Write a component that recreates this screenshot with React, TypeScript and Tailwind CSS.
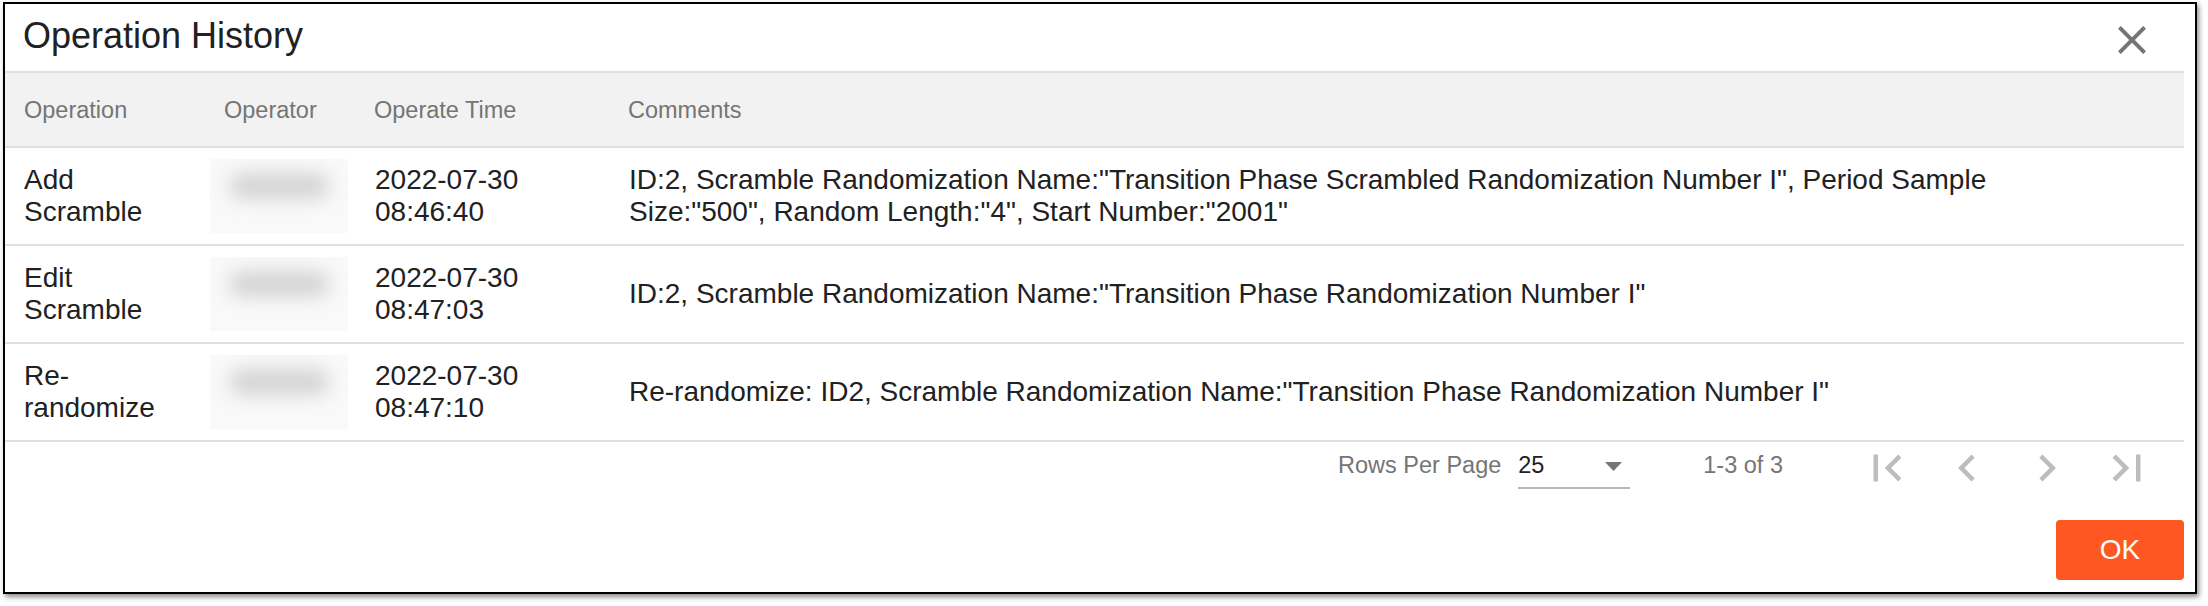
import React from "react";

type Row = {
  op: string[];
  time: string[];
  comment: string[];
};

const rows: Row[] = [
  {
    op: ["Add", "Scramble"],
    time: ["2022-07-30", "08:46:40"],
    comment: [
      'ID:2, Scramble Randomization Name:"Transition Phase Scrambled Randomization Number I", Period Sample',
      'Size:"500", Random Length:"4", Start Number:"2001"',
    ],
  },
  {
    op: ["Edit", "Scramble"],
    time: ["2022-07-30", "08:47:03"],
    comment: ['ID:2, Scramble Randomization Name:"Transition Phase Randomization Number I"'],
  },
  {
    op: ["Re-", "randomize"],
    time: ["2022-07-30", "08:47:10"],
    comment: ['Re-randomize: ID2, Scramble Randomization Name:"Transition Phase Randomization Number I"'],
  },
];

function Lines({ lines }: { lines: string[] }) {
  return (
    <div>
      {lines.map((l, i) => (
        <div key={i} className="whitespace-nowrap">
          {l}
        </div>
      ))}
    </div>
  );
}

function BlurName() {
  return (
    <div className="ml-[5px] flex h-[74px] w-[138px] justify-center overflow-hidden bg-[#f9f9f9] pt-[14px]">
      <div className="h-[26px] w-[100px] rounded-full bg-[#d4d4d4] blur-[9px]" />
    </div>
  );
}

function PagerIcon({ d }: { d: string }) {
  return (
    <svg width="54" height="54" viewBox="0 0 24 24" className="fill-[#bdbdbd]">
      <path d={d} />
    </svg>
  );
}

export default function App() {
  return (
    <div className="h-[606px] w-[2208px] overflow-hidden bg-white font-['Liberation_Sans',Arial,sans-serif] text-[#212121]">
      <div className="ml-[3px] mt-[2px] flex h-[592px] w-[2194px] flex-col border-2 border-black bg-white shadow-[2px_3px_5px_rgba(0,0,0,0.45)]">
        {/* Title bar */}
        <div className="flex h-[67px] items-start justify-between">
          <div className="pl-[18px] pt-[12px] text-[36px] leading-[40px]">Operation History</div>
          <svg width="48" height="48" viewBox="0 0 24 24" className="mr-[39px] mt-[12px] fill-[#757575]">
            <path d="M19 6.41L17.59 5 12 10.59 6.41 5 5 6.41 10.59 12 5 17.59 6.41 19 12 13.41 17.59 19 19 17.59 13.41 12z" />
          </svg>
        </div>

        <div className="mr-[11px] flex flex-col">
          {/* Header */}
          <div className="flex h-[77px] items-center border-y-2 border-[#e0e0e0] bg-[#f2f2f2] text-[23.5px] leading-[28px] text-[#757575]">
            <div className="w-[200px] pl-[19px]">Operation</div>
            <div className="w-[150px] pl-[19px]">Operator</div>
            <div className="w-[254px] pl-[19px]">Operate Time</div>
            <div className="flex-1 pl-[19px]">Comments</div>
          </div>

          {/* Rows */}
          {rows.map((r, i) => (
            <div
              key={i}
              className="flex h-[98px] items-center border-b-2 border-[#e0e0e0] text-[28px] leading-[32px]"
            >
              <div className="w-[200px] pl-[19px]">
                <Lines lines={r.op} />
              </div>
              <div className="w-[150px]">
                <BlurName />
              </div>
              <div className="w-[254px] pl-[20px]">
                <Lines lines={r.time} />
              </div>
              <div className="flex-1 pl-[20px]">
                <Lines lines={r.comment} />
              </div>
            </div>
          ))}

          {/* Pagination */}
          <div className="flex h-[54px] items-start justify-end pr-[30px] text-[23.5px] leading-[28px] text-[#757575]">
            <div className="mt-[9px]">Rows Per Page</div>
            <div className="ml-[17px] mt-[9px] flex h-[38px] w-[112px] items-start justify-between border-b-2 border-[#b8b8b8]">
              <span className="text-[#212121]">25</span>
              <svg width="17" height="9" viewBox="0 0 17 9" className="mr-[8px] mt-[11px] fill-[#757575]">
                <path d="M0 0h17L8.5 9z" />
              </svg>
            </div>
            <div className="ml-[73px] mt-[9px]">1-3 of 3</div>
            <div className="ml-[77px] mt-[-1px] flex gap-[26px]">
              <PagerIcon d="M18.41 16.59L13.82 12l4.59-4.59L17 6l-6 6 6 6zM6 6h2v12H6z" />
              <PagerIcon d="M15.41 7.41L14 6l-6 6 6 6 1.41-1.41L10.83 12z" />
              <PagerIcon d="M10 6L8.59 7.41 13.17 12l-4.58 4.59L10 18l6-6z" />
              <PagerIcon d="M5.59 7.41L10.18 12l-4.59 4.59L7 18l6-6-6-6zM16 6h2v12h-2z" />
            </div>
          </div>

          {/* Footer */}
          <div className="mt-[24px] flex justify-end">
            <button className="flex h-[60px] w-[128px] items-center justify-center rounded-[4px] bg-[#ff5722] text-[28px] leading-[32px] text-white">
              OK
            </button>
          </div>
        </div>
      </div>
    </div>
  );
}
